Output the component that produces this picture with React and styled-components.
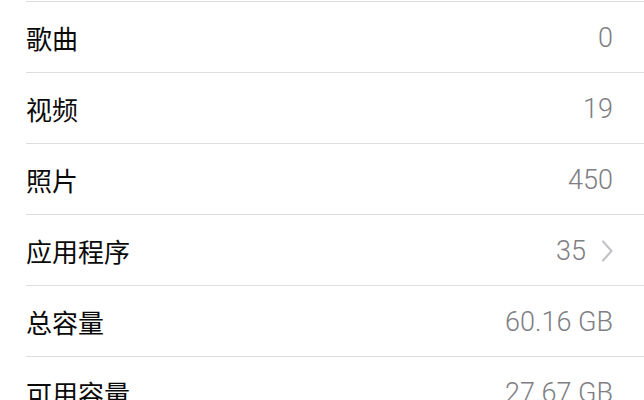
import React from 'react';
import styled, { createGlobalStyle } from 'styled-components';

const GlobalStyle = createGlobalStyle`
  html, body {
    margin: 0;
    padding: 0;
    background: #ffffff;
  }
  body {
    font-family: "Noto Sans CJK SC", "Noto Sans", sans-serif;
    -webkit-font-smoothing: antialiased;
  }
`;

const List = styled.div`
  width: 644px;
  height: 400px;
  overflow: hidden;
  padding-top: 1px;
  padding-left: 26px;
  box-sizing: border-box;
  background: #ffffff;
`;

const Row = styled.div`
  display: flex;
  align-items: center;
  justify-content: space-between;
  height: 70px;
  border-top: 1px solid #dedee2;
  padding-right: 31px;
  cursor: ${props => (props.$link ? 'pointer' : 'default')};
`;

const Label = styled.span`
  font-family: "Noto Sans CJK SC", "Noto Sans", sans-serif;
  font-size: 26px;
  color: #0a0a0a;
  line-height: 1;
  padding-top: 2px;
`;

const Value = styled.span`
  display: flex;
  align-items: center;
  gap: 15px;
  font-family: Roboto, "Liberation Sans", sans-serif;
  font-size: 27px;
  font-weight: 300;
  color: #7e7e83;
  line-height: 1;
  padding-top: 2px;
`;

const Chevron = () => (
  <svg width="12" height="24" viewBox="0 0 12 24" fill="none">
    <path d="M2 2.5 L10.5 12 L2 21.5" stroke="#c4c4c8" strokeWidth="2.2" strokeLinecap="round" strokeLinejoin="round" />
  </svg>
);

const rows = [
  { label: '歌曲', value: '0' },
  { label: '视频', value: '19' },
  { label: '照片', value: '450' },
  { label: '应用程序', value: '35', link: true },
  { label: '总容量', value: '60.16 GB' },
  { label: '可用容量', value: '27.67 GB' },
];

export default function App() {
  return (
    <>
      <GlobalStyle />
      <List>
        {rows.map(r => (
          <Row key={r.label} $link={r.link}>
            <Label>{r.label}</Label>
            <Value>
              {r.value}
              {r.link && <Chevron />}
            </Value>
          </Row>
        ))}
      </List>
    </>
  );
}
